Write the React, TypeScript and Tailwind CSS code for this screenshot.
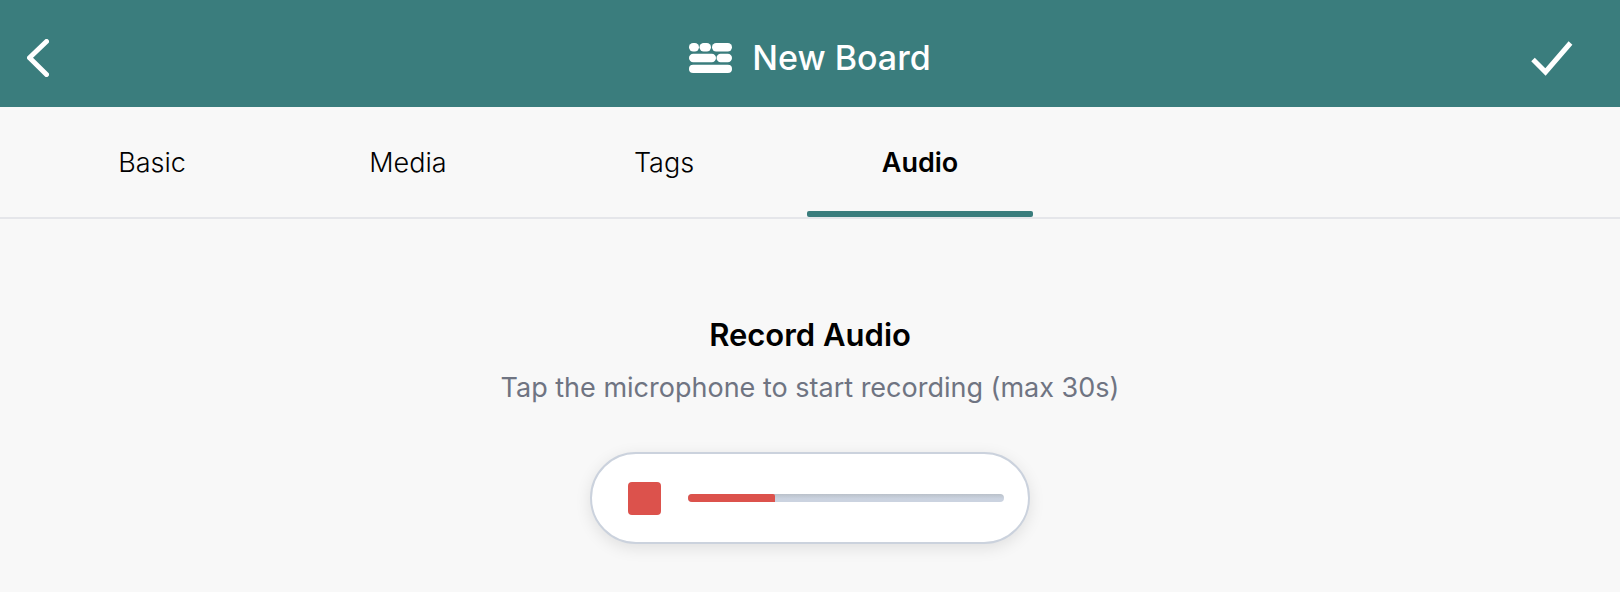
import React, { useState } from 'react';

const TABS = ['Basic', 'Media', 'Tags', 'Audio'];
const MAX_SECONDS = 30;

const BoardIcon: React.FC = () => (
    <svg width="43" height="30" viewBox="0 0 43 30" fill="currentColor" aria-hidden="true">
        <rect x="0" y="0" width="10" height="8.5" rx="4.2" />
        <rect x="10.5" y="0" width="11.5" height="8.5" rx="4.2" />
        <rect x="23" y="0" width="20" height="8.5" rx="4.2" />
        <rect x="0" y="10.8" width="27" height="8.5" rx="4.2" />
        <rect x="27.5" y="10.8" width="15.5" height="8.5" rx="4.2" />
        <rect x="0" y="21.8" width="43" height="8.2" rx="4.1" />
    </svg>
);

const Header: React.FC = () => (
    <header className="grid h-[107px] grid-cols-[1fr_auto_1fr] items-center bg-[#3a7d7d] px-[27px] pt-2 text-white">
        <button type="button" aria-label="Back" className="justify-self-start">
            <svg width="22" height="38" viewBox="0 0 22 38" fill="none" stroke="currentColor" strokeWidth="5" strokeLinecap="round" strokeLinejoin="round">
                <path d="M19.5 2.5 L2.5 18.8 L19.5 35.5" />
            </svg>
        </button>
        <div className="flex items-center gap-5">
            <BoardIcon />
            <h1 className="text-[34px] leading-10 font-medium">New Board</h1>
        </div>
        <button type="button" aria-label="Save" className="justify-self-end pr-5">
            <svg width="42" height="36" viewBox="0 0 42 36" fill="none" stroke="currentColor" strokeWidth="5">
                <path d="M2 19.5 L14.5 32 L39.5 3" />
            </svg>
        </button>
    </header>
);

interface TabBarProps {
    active: string;
    onChange: (tab: string) => void;
}

const TabBar: React.FC<TabBarProps> = ({ active, onChange }) => (
    <nav role="tablist" className="flex gap-[30px] border-b-2 border-[#e5e6ea] pl-[39px]">
        {TABS.map(tab => (
            <button
                key={tab}
                type="button"
                role="tab"
                aria-selected={tab === active}
                onClick={() => onChange(tab)}
                className="flex w-[226px] flex-col items-center"
            >
                <span className={tab === active ? 'pt-9 pb-7 text-[27px] leading-10 font-semibold' : 'pt-9 pb-7 text-[27px] leading-10 font-light'}>
                    {tab}
                </span>
                <span className={tab === active ? 'h-1.5 w-full rounded-xs bg-[#3a7d7d]' : 'h-1.5 w-full'} />
            </button>
        ))}
    </nav>
);

const Recorder: React.FC<{ seconds: number }> = ({ seconds }) => (
    <div className="flex h-[92px] w-[440px] items-center gap-[27px] rounded-full border-2 border-[#cbd2dd] bg-white pr-6 pl-9 shadow-[0_4px_16px_rgba(0,0,0,0.1)]">
        <button type="button" aria-label="Stop recording" className="size-[33px] shrink-0 rounded-sm bg-[#dc524c]" />
        <div
            role="progressbar"
            aria-label="Recording progress"
            aria-valuenow={seconds}
            aria-valuemax={MAX_SECONDS}
            className="h-2 flex-1 overflow-hidden rounded-full bg-linear-to-b from-[#bac1ca] to-[#cbd3e0] to-60%"
        >
            <div className="h-full rounded-tr-xs bg-[#dc524c]" style={{ width: `${(seconds / MAX_SECONDS) * 100}%` }} />
        </div>
    </div>
);

const App: React.FC = () => {
    const [activeTab, setActiveTab] = useState('Audio');

    return (
        <div className="min-h-screen bg-[#f8f8f8] font-['Inter',sans-serif] text-black">
            <Header />
            <TabBar active={activeTab} onChange={setActiveTab} />
            <main className="flex flex-col items-center pt-24">
                <h2 className="text-[31px] leading-10 font-semibold">Record Audio</h2>
                <p className="mt-[13px] mb-11 text-[27px] leading-10 text-[#6f7482]">
                    Tap the microphone to start recording (max 30s)
                </p>
                <Recorder seconds={8.25} />
            </main>
        </div>
    );
};

export default App;
